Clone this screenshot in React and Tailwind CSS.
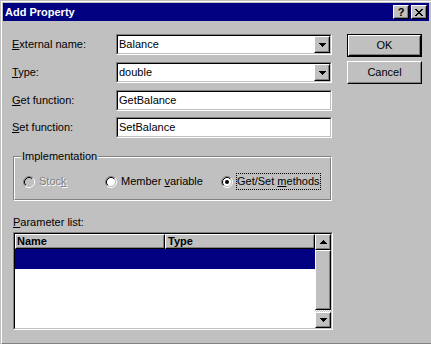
import React from "react";

function Raised({ className = "", inner = "", children }) {
  return (
    <div className={"border border-t-white border-l-white border-b-black border-r-black bg-[#c0c0c0] " + className}>
      <div className={"w-full h-full border border-t-[#c0c0c0] border-l-[#c0c0c0] border-b-[#808080] border-r-[#808080] " + inner}>
        {children}
      </div>
    </div>
  );
}

function Sunken({ className = "", inner = "", children }) {
  return (
    <div className={"border border-t-[#808080] border-l-[#808080] border-b-white border-r-white " + className}>
      <div className={"w-full h-full border border-t-black border-l-black border-b-[#c0c0c0] border-r-[#c0c0c0] " + inner}>
        {children}
      </div>
    </div>
  );
}

function ArrowDown() {
  return (
    <svg width="7" height="4" viewBox="0 0 7 4" shapeRendering="crispEdges">
      <rect x="0" y="0" width="7" height="1" fill="#000" />
      <rect x="1" y="1" width="5" height="1" fill="#000" />
      <rect x="2" y="2" width="3" height="1" fill="#000" />
      <rect x="3" y="3" width="1" height="1" fill="#000" />
    </svg>
  );
}

function ArrowUp() {
  return (
    <svg width="7" height="4" viewBox="0 0 7 4" shapeRendering="crispEdges">
      <rect x="3" y="0" width="1" height="1" fill="#000" />
      <rect x="2" y="1" width="3" height="1" fill="#000" />
      <rect x="1" y="2" width="5" height="1" fill="#000" />
      <rect x="0" y="3" width="7" height="1" fill="#000" />
    </svg>
  );
}

function CloseGlyph() {
  const rows = [
    [0, 1, 6, 7],
    [1, 2, 5, 6],
    [2, 3, 4, 5],
    [3, 4],
    [2, 3, 4, 5],
    [1, 2, 5, 6],
    [0, 1, 6, 7],
  ];
  return (
    <svg width="8" height="7" viewBox="0 0 8 7" shapeRendering="crispEdges">
      {rows.map((r, y) => r.map((x) => <rect key={y + "-" + x} x={x} y={y} width="1" height="1" fill="#000" />))}
    </svg>
  );
}

function Radio({ checked, disabled }) {
  return (
    <svg width="12" height="12" viewBox="0 0 12 12" className="shrink-0">
      <circle cx="6" cy="6" r="4.2" fill={disabled ? "#c0c0c0" : "#ffffff"} />
      <path d="M2.11 9.89 A5.5 5.5 0 0 1 9.89 2.11" stroke="#808080" fill="none" />
      <path d="M9.89 2.11 A5.5 5.5 0 0 1 2.11 9.89" stroke="#ffffff" fill="none" />
      <path d="M2.82 9.18 A4.5 4.5 0 0 1 9.18 2.82" stroke="#000000" fill="none" />
      <path d="M9.18 2.82 A4.5 4.5 0 0 1 2.82 9.18" stroke="#c0c0c0" fill="none" />
      {checked && <circle cx="6" cy="6" r="2" fill="#000" />}
    </svg>
  );
}

function Row({ u, rest, className = "", children }) {
  return (
    <div className={"flex items-center h-[21px] " + className}>
      <div className="w-[104px]">
        <u>{u}</u>
        {rest}
      </div>
      {children}
    </div>
  );
}

function Combo({ value }) {
  return (
    <Sunken className="w-[216px] h-[21px]" inner="bg-white flex items-center">
      <span className="flex-1 pl-[1px]">{value}</span>
      <Raised className="w-[16px] h-full" inner="flex items-center justify-center">
        <ArrowDown />
      </Raised>
    </Sunken>
  );
}

function Edit({ value }) {
  return (
    <Sunken className="w-[216px] h-[21px]" inner="bg-white flex items-center">
      <span className="flex-1 pl-[1px]">{value}</span>
    </Sunken>
  );
}

export default function App() {
  return (
    <div className="w-[431px] h-[344px] bg-[#c0c0c0] pt-px pl-px overflow-hidden font-['Liberation_Sans',Arial,sans-serif] text-[11px] leading-[13px] text-black">
      <div className="h-[343px] border-l border-t border-b border-l-white border-t-white border-b-[#808080] pt-px pl-px">
        {/* Title bar */}
        <div className="h-[18px] w-[426px] bg-[#000080] flex items-center pl-[2px] pr-[2px]">
          <span className="text-white font-bold">Add Property</span>
          <Raised className="ml-auto w-[16px] h-[14px]" inner="flex items-center justify-center">
            <span className="font-bold leading-[11px]">?</span>
          </Raised>
          <Raised className="ml-[2px] w-[16px] h-[14px]" inner="flex items-center justify-center">
            <CloseGlyph />
          </Raised>
        </div>

        {/* Content */}
        <div className="pl-[9px] pt-[13px]">
          <div className="flex">
            <div className="flex flex-col w-[320px]">
              <Row u="E" rest="xternal name:">
                <Combo value="Balance" />
              </Row>
              <Row u="T" rest="ype:" className="mt-[7px]">
                <Combo value="double" />
              </Row>
              <Row u="G" rest="et function:" className="mt-[7px]">
                <Edit value="GetBalance" />
              </Row>
              <Row u="S" rest="et function:" className="mt-[6px]">
                <Edit value="SetBalance" />
              </Row>
            </div>
            <div className="ml-[15px] flex flex-col">
              <div className="w-[75px] h-[23px] border border-black">
                <Raised className="w-full h-full" inner="flex items-center justify-center">
                  OK
                </Raised>
              </div>
              <Raised className="w-[75px] h-[23px] mt-[4px]" inner="flex items-center justify-center">
                Cancel
              </Raised>
            </div>
          </div>

          {/* Group box */}
          <div className="relative ml-[1px] mt-[18px] w-[319px] h-[45px] border border-t-[#808080] border-l-[#808080] border-r-white border-b-white">
            <div className="w-full h-full border border-t-white border-l-white border-r-[#808080] border-b-[#808080] pt-[15px] pl-[8px]">
              <div className="flex items-center h-[17px]">
                <div className="w-[82px] flex items-center">
                  <Radio disabled />
                  <span className="ml-[4px] text-[#808080] [text-shadow:1px_1px_0_#ffffff]">
                    Stoc<u>k</u>
                  </span>
                </div>
                <div className="w-[116px] flex items-center">
                  <Radio />
                  <span className="ml-[4px]">
                    Member <u>v</u>ariable
                  </span>
                </div>
                <div className="flex items-center">
                  <Radio checked />
                  <div className="ml-[3px] h-[17px] flex items-center border border-dotted border-black">
                    <span className="whitespace-pre">
                      Get/Set <u>m</u>ethods
                    </span>
                  </div>
                </div>
              </div>
            </div>
            <span className="absolute left-[7px] top-[-7px] px-[1px] bg-[#c0c0c0]">Implementation</span>
          </div>

          {/* Parameter list */}
          <div className="ml-[1px] mt-[15px]">
            <u>P</u>arameter list:
          </div>
          <Sunken className="ml-[1px] mt-[3px] w-[320px] h-[98px]" inner="bg-white flex">
            <div className="w-[300px] flex flex-col">
              <div className="flex h-[15px]">
                <Raised className="w-[150px] h-full" inner="flex items-center font-bold">
                  Name
                </Raised>
                <Raised className="w-[150px] h-full" inner="flex items-center font-bold pl-[1px]">
                  Type
                </Raised>
              </div>
              <div className="h-[20px] bg-[#000080]" />
            </div>
            <div className="w-[16px] flex flex-col">
              <Raised className="w-[16px] h-[16px]" inner="flex items-center justify-center">
                <ArrowUp />
              </Raised>
              <Raised className="w-[16px] h-[60px]" />
              <div className="h-[2px] bg-[repeating-conic-gradient(#ffffff_0_25%,#c0c0c0_0_50%)] bg-[length:2px_2px]" />
              <Raised className="w-[16px] h-[16px]" inner="flex items-center justify-center">
                <ArrowDown />
              </Raised>
            </div>
          </Sunken>
        </div>
      </div>
    </div>
  );
}
